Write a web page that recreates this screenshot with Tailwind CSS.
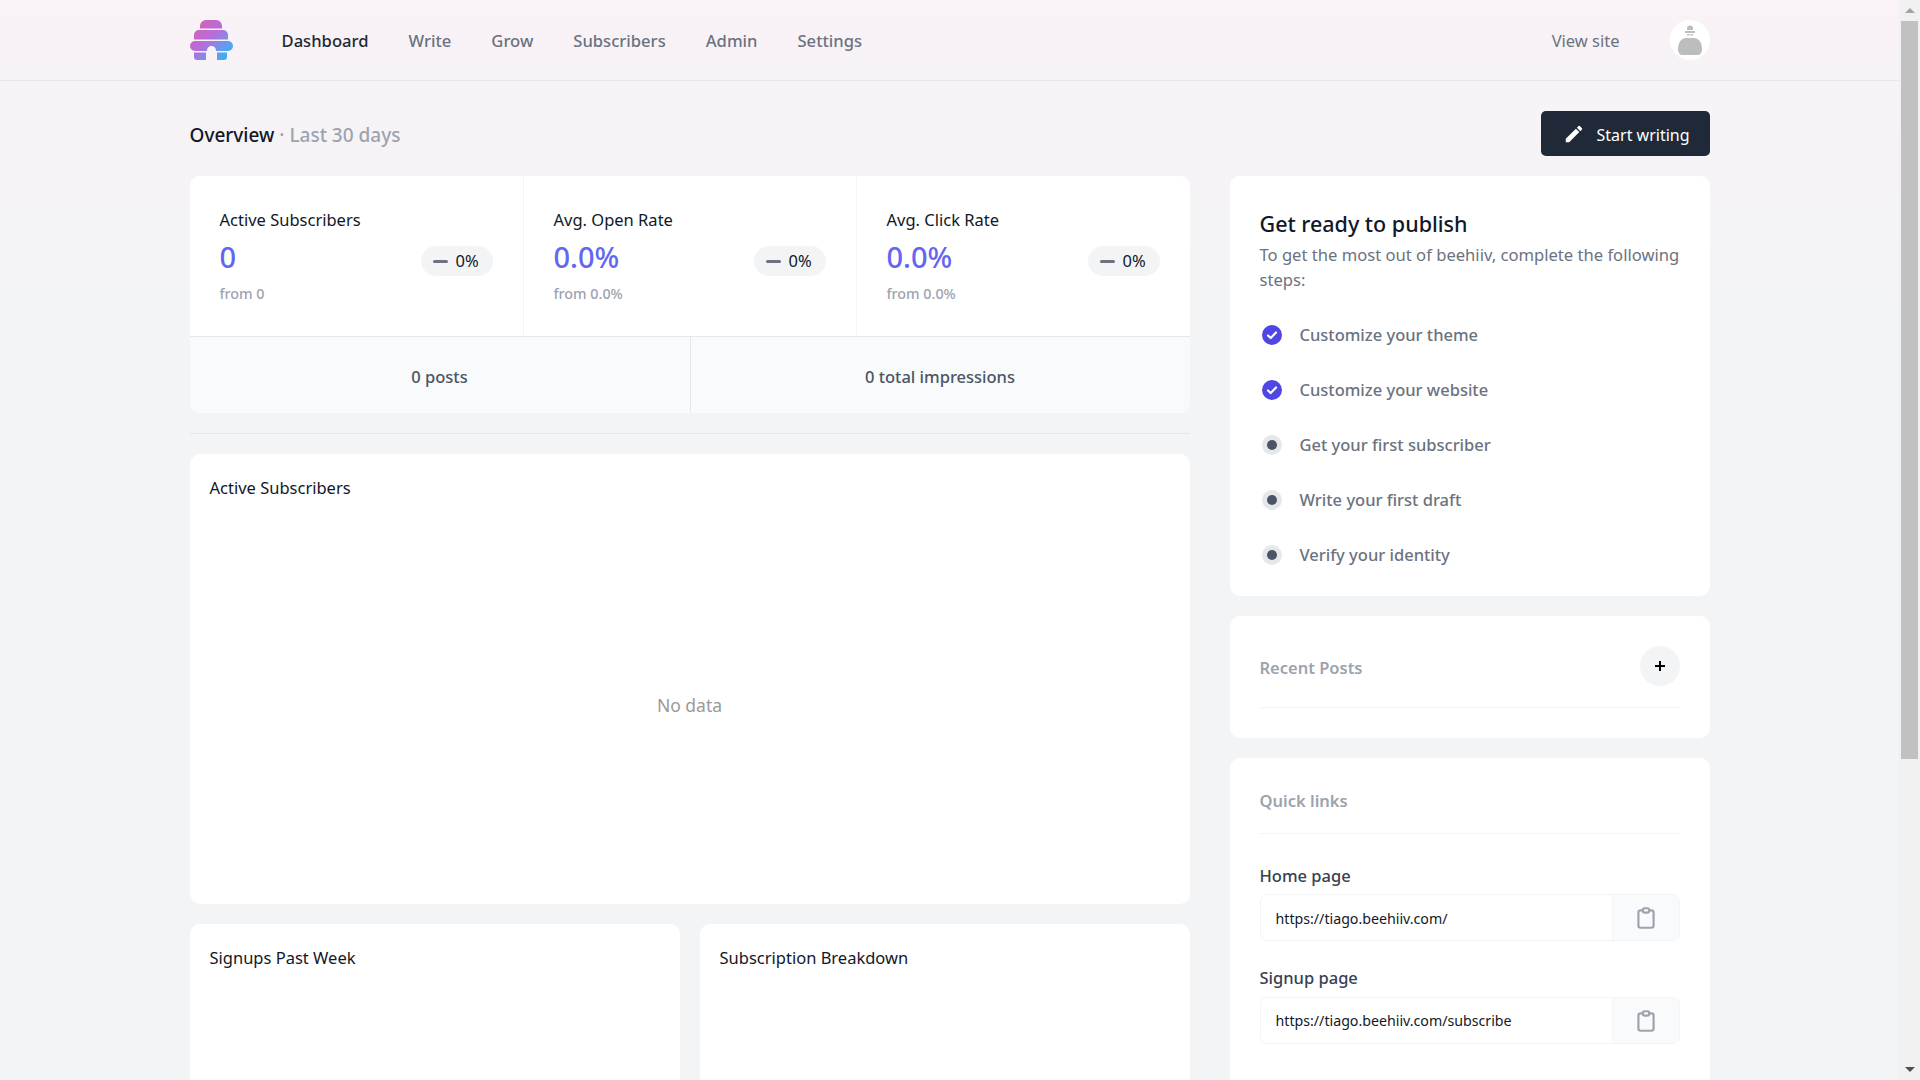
<!DOCTYPE html>
<html lang="en">
<head>
  <meta charset="UTF-8">
  <title>Dashboard</title>
  <script src="https://cdn.jsdelivr.net/npm/@tailwindcss/browser@4"></script>
</head>
<body class="h-[1080px] overflow-hidden flex font-['Noto_Sans',sans-serif] bg-[#f3f4f6]">

<div class="flex-1 h-[1080px] overflow-hidden bg-[linear-gradient(180deg,#f9f2f7_0px,#f3f4f6_300px)]">
  <!-- top nav -->
  <header class="h-[81px] border-b border-[#e5e7eb]">
    <div class="w-[1520px] h-[80px] mx-auto flex items-center">
      <svg class="w-[43px] h-[40px] mb-[1px]" viewBox="0 0 43 40">
        <defs>
          <linearGradient id="hive" x1="0" y1="0" x2="1" y2="1">
            <stop offset="0" stop-color="#d95fb0"/>
            <stop offset="0.45" stop-color="#b86cd8"/>
            <stop offset="0.75" stop-color="#5f9ff0"/>
            <stop offset="1" stop-color="#1fbcec"/>
          </linearGradient>
        </defs>
        <path fill="url(#hive)" d="M10 8.500V6a6 6 0 0 1 6-6h10a6 6 0 0 1 6 6v2.500zM4 19.500V15a5 5 0 0 1 5-5h24a5 5 0 0 1 5 5v4.500zM5 21h33a5 5 0 0 1 0 10H26v-.5a4.500 4.500 0 0 0-9 0v.5H5a5 5 0 0 1 0-10zM4 32.500h12V40H7a3 3 0 0 1-3-3zM27 32.500h10V37a3 3 0 0 1-3 3h-7z"/>
      </svg>
      <nav class="flex items-center gap-[40px] ml-[49px] pt-[2px] text-[16.6px] leading-6 font-medium text-[#6b7280]">
        <a class="text-[#1f2937]">Dashboard</a>
        <a>Write</a>
        <a>Grow</a>
        <a>Subscribers</a>
        <a>Admin</a>
        <a>Settings</a>
      </nav>
      <a class="ml-auto mr-[50px] pt-[2px] text-[16.5px] leading-6 text-[#6b7280]">View site</a>
      <div class="w-[40px] h-[40px] rounded-full bg-white flex items-center justify-center">
        <svg class="w-[40px] h-[40px]" viewBox="0 0 40 40" fill="#bdbdbd">
          <path d="M17 8.500a3 3 0 0 1 6 0V10h-6zM15 11h10v2H15zM17 14h2.500v1.500H17zM20.500 14H23v1.500h-2.500z"/>
          <path d="M16 18h8c5 0 8 5 8 11 0 4-2 6-5 6H13c-3 0-5-2-5-6 0-6 3-11 8-11z"/>
        </svg>
      </div>
    </div>
  </header>

  <main class="w-[1520px] mx-auto pt-[30px]">
    <div class="flex items-center justify-between mb-[20px] h-[45px]">
      <h1 class="text-[19px] leading-7 pt-[2px] font-medium text-[#111827]">Overview <span class="text-[#9ca3af]">· Last 30 days</span></h1>
      <button class="w-[169px] h-[45px] rounded-[5px] bg-[#1f2937] text-white flex items-center pl-[22px] gap-[12px] text-[16px]">
        <svg class="w-[22px] h-[22px]" viewBox="0 0 24 24" fill="white"><path d="M3 17.250V21h3.750L17.810 9.940l-3.750-3.750L3 17.250zM20.710 7.040a.996.996 0 0 0 0-1.410l-2.340-2.340a.996.996 0 0 0-1.410 0l-1.830 1.830 3.750 3.750 1.830-1.830z"/></svg>
        <span class="pt-[2px]">Start writing</span>
      </button>
    </div>

    <div class="flex gap-[40px] items-start">
      <!-- left column -->
      <div class="w-[1000px] flex flex-col">
        <section class="bg-white rounded-[10px] overflow-hidden">
          <div class="grid grid-cols-[334px_333px_333px] h-[161px] border-b border-[#e5e7eb]">
            <div class="px-[30px] pt-[32px] border-r border-[#f3f4f6]">
              <div class="text-[16.500px] leading-6 text-[#111827]">Active Subscribers</div>
              <div class="flex justify-between items-start mt-[7px]">
                <div>
                  <div class="text-[29px] leading-9 font-medium text-[#6366f1]">0</div>
                  <div class="text-[14.300px] leading-5 font-medium text-[#9ca3af] mt-[9px]">from 0</div>
                </div>
                <div class="mt-[7px] w-[72px] h-[30px] rounded-full bg-[#f3f4f6] flex items-center pl-[12px] gap-[8px] text-[16.500px] text-[#111827]">
                  <span class="w-[15px] h-[3px] bg-[#6b7280] rounded-sm"></span>0%
                </div>
              </div>
            </div>
            <div class="px-[30px] pt-[32px] border-r border-[#f3f4f6]">
              <div class="text-[16.500px] leading-6 text-[#111827]">Avg. Open Rate</div>
              <div class="flex justify-between items-start mt-[7px]">
                <div>
                  <div class="text-[29px] leading-9 font-medium text-[#6366f1]">0.0%</div>
                  <div class="text-[14.300px] leading-5 font-medium text-[#9ca3af] mt-[9px]">from 0.0%</div>
                </div>
                <div class="mt-[7px] w-[72px] h-[30px] rounded-full bg-[#f3f4f6] flex items-center pl-[12px] gap-[8px] text-[16.500px] text-[#111827]">
                  <span class="w-[15px] h-[3px] bg-[#6b7280] rounded-sm"></span>0%
                </div>
              </div>
            </div>
            <div class="px-[30px] pt-[32px]">
              <div class="text-[16.500px] leading-6 text-[#111827]">Avg. Click Rate</div>
              <div class="flex justify-between items-start mt-[7px]">
                <div>
                  <div class="text-[29px] leading-9 font-medium text-[#6366f1]">0.0%</div>
                  <div class="text-[14.300px] leading-5 font-medium text-[#9ca3af] mt-[9px]">from 0.0%</div>
                </div>
                <div class="mt-[7px] w-[72px] h-[30px] rounded-full bg-[#f3f4f6] flex items-center pl-[12px] gap-[8px] text-[16.500px] text-[#111827]">
                  <span class="w-[15px] h-[3px] bg-[#6b7280] rounded-sm"></span>0%
                </div>
              </div>
            </div>
          </div>
          <div class="grid grid-cols-[501px_499px] h-[76px] bg-[#f9fafb] text-[16.500px] font-medium text-[#4b5563]">
            <div class="flex items-center justify-center border-r border-[#e5e7eb] pt-[5px]">0 posts</div>
            <div class="flex items-center justify-center pt-[5px]">0 total impressions</div>
          </div>
        </section>

        <hr class="border-[#e5e7eb] mt-[20px] mb-[20px]">

        <section class="bg-white rounded-[10px] h-[450px] px-[20px] pt-[22px] flex flex-col">
          <h2 class="text-[16.500px] leading-6 text-[#111827]">Active Subscribers</h2>
          <div class="flex-1 flex items-center justify-center text-[17.500px] text-[#9a9a9a] pt-[6px]">No data</div>
        </section>

        <div class="grid grid-cols-2 gap-[20px] mt-[20px]">
          <section class="bg-white rounded-[10px] h-[400px] px-[20px] pt-[22px]">
            <h2 class="text-[16.500px] leading-6 text-[#111827]">Signups Past Week</h2>
          </section>
          <section class="bg-white rounded-[10px] h-[400px] px-[20px] pt-[22px]">
            <h2 class="text-[16.500px] leading-6 text-[#111827]">Subscription Breakdown</h2>
          </section>
        </div>
      </div>

      <!-- right column -->
      <div class="w-[480px] flex flex-col gap-[20px]">
        <section class="bg-white rounded-[10px] h-[420px] px-[30px] pt-[33px]">
          <h2 class="text-[21.500px] leading-[30px] font-medium text-[#111827]">Get ready to publish</h2>
          <p class="text-[16.600px] leading-[25px] text-[#6b7280] mt-[3px]">To get the most out of beehiiv, complete the following steps:</p>
          <ul class="mt-[16px] flex flex-col text-[16.500px] font-medium text-[#6b7280]">
            <li class="h-[55px] flex items-center gap-[18px]">
              <svg class="w-[22px] h-[22px] ml-[1px] -mr-[1px] mb-[2px]" viewBox="0 0 22 22"><circle cx="11" cy="11" r="10" fill="#4f46e5"/><path d="M7 11.500l2.700 2.500L15 8.500" fill="none" stroke="white" stroke-width="2.200" stroke-linecap="round" stroke-linejoin="round"/></svg>
              <span>Customize your theme</span>
            </li>
            <li class="h-[55px] flex items-center gap-[18px]">
              <svg class="w-[22px] h-[22px] ml-[1px] -mr-[1px] mb-[2px]" viewBox="0 0 22 22"><circle cx="11" cy="11" r="10" fill="#4f46e5"/><path d="M7 11.500l2.700 2.500L15 8.500" fill="none" stroke="white" stroke-width="2.200" stroke-linecap="round" stroke-linejoin="round"/></svg>
              <span>Customize your website</span>
            </li>
            <li class="h-[55px] flex items-center gap-[18px]">
              <svg class="w-[22px] h-[22px] ml-[1px] -mr-[1px] mb-[2px]" viewBox="0 0 22 22"><circle cx="11" cy="11" r="10" fill="#e5e7eb"/><circle cx="11" cy="11" r="5" fill="#4b5563"/></svg>
              <span>Get your first subscriber</span>
            </li>
            <li class="h-[55px] flex items-center gap-[18px]">
              <svg class="w-[22px] h-[22px] ml-[1px] -mr-[1px] mb-[2px]" viewBox="0 0 22 22"><circle cx="11" cy="11" r="10" fill="#e5e7eb"/><circle cx="11" cy="11" r="5" fill="#4b5563"/></svg>
              <span>Write your first draft</span>
            </li>
            <li class="h-[55px] flex items-center gap-[18px]">
              <svg class="w-[22px] h-[22px] ml-[1px] -mr-[1px] mb-[2px]" viewBox="0 0 22 22"><circle cx="11" cy="11" r="10" fill="#e5e7eb"/><circle cx="11" cy="11" r="5" fill="#4b5563"/></svg>
              <span>Verify your identity</span>
            </li>
          </ul>
        </section>

        <section class="bg-white rounded-[10px] h-[122px] px-[30px] pt-[30px]">
          <div class="flex items-center justify-between h-[40px]">
            <h2 class="text-[16.500px] font-semibold text-[#9ca3af] pt-[5px]">Recent Posts</h2>
            <button class="w-[40px] h-[40px] rounded-full bg-[#f3f4f6] flex items-center justify-center">
              <svg class="w-[12px] h-[12px]" viewBox="0 0 12 12"><path d="M6 1v10M1 6h10" stroke="black" stroke-width="2"/></svg>
            </button>
          </div>
          <hr class="border-[#f3f4f6] mt-[21px]">
        </section>

        <section class="bg-white rounded-[10px] h-[500px] px-[30px] pt-[31px]">
          <h2 class="text-[16.500px] leading-6 font-semibold text-[#9ca3af]">Quick links</h2>
          <hr class="border-[#f3f4f6] mt-[20px]">
          <div class="text-[16.500px] leading-6 font-medium text-[#374151] mt-[30px]">Home page</div>
          <div class="flex h-[47px] mt-[6px] border border-[#f3f4f6] rounded-[7px] overflow-hidden">
            <div class="flex-1 flex items-center pl-[15px] pt-[2px] text-[14.200px] text-[#111827]">https://tiago.beehiiv.com/</div>
            <div class="w-[67px] bg-[#f9fafb] border-l border-[#f3f4f6] flex items-center justify-center">
              <svg class="w-[26px] h-[26px]" viewBox="0 0 24 24" fill="none" stroke="#9ca3af" stroke-width="2" stroke-linecap="round" stroke-linejoin="round"><path d="M9 5H7a2 2 0 0 0-2 2v12a2 2 0 0 0 2 2h10a2 2 0 0 0 2-2V7a2 2 0 0 0-2-2h-2M9 5a2 2 0 0 0 2 2h2a2 2 0 0 0 2-2M9 5a2 2 0 0 1 2-2h2a2 2 0 0 1 2 2"/></svg>
            </div>
          </div>
          <div class="text-[16.500px] leading-6 font-medium text-[#374151] mt-[25px]">Signup page</div>
          <div class="flex h-[47px] mt-[7px] border border-[#f3f4f6] rounded-[7px] overflow-hidden">
            <div class="flex-1 flex items-center pl-[15px] text-[14.200px] text-[#111827]">https://tiago.beehiiv.com/subscribe</div>
            <div class="w-[67px] bg-[#f9fafb] border-l border-[#f3f4f6] flex items-center justify-center">
              <svg class="w-[26px] h-[26px]" viewBox="0 0 24 24" fill="none" stroke="#9ca3af" stroke-width="2" stroke-linecap="round" stroke-linejoin="round"><path d="M9 5H7a2 2 0 0 0-2 2v12a2 2 0 0 0 2 2h10a2 2 0 0 0 2-2V7a2 2 0 0 0-2-2h-2M9 5a2 2 0 0 0 2 2h2a2 2 0 0 0 2-2M9 5a2 2 0 0 1 2-2h2a2 2 0 0 1 2 2"/></svg>
            </div>
          </div>
        </section>
      </div>
    </div>
  </main>
</div>

<!-- scrollbar -->
<div class="w-[21px] h-[1080px] bg-[#f1f1f1] flex flex-col items-center shrink-0">
  <div class="h-[21px] flex items-center justify-center">
    <svg class="w-[10px] h-[5px]" viewBox="0 0 10 5"><path d="M5 0l5 5H0z" fill="#a3a3a3"/></svg>
  </div>
  <div class="w-[17px] h-[738px] bg-[#c1c1c1]"></div>
  <div class="flex-1"></div>
  <div class="h-[21px] flex items-center justify-center">
    <svg class="w-[10px] h-[5px]" viewBox="0 0 10 5"><path d="M5 5l5-5H0z" fill="#505050"/></svg>
  </div>
</div>

</body>
</html>
